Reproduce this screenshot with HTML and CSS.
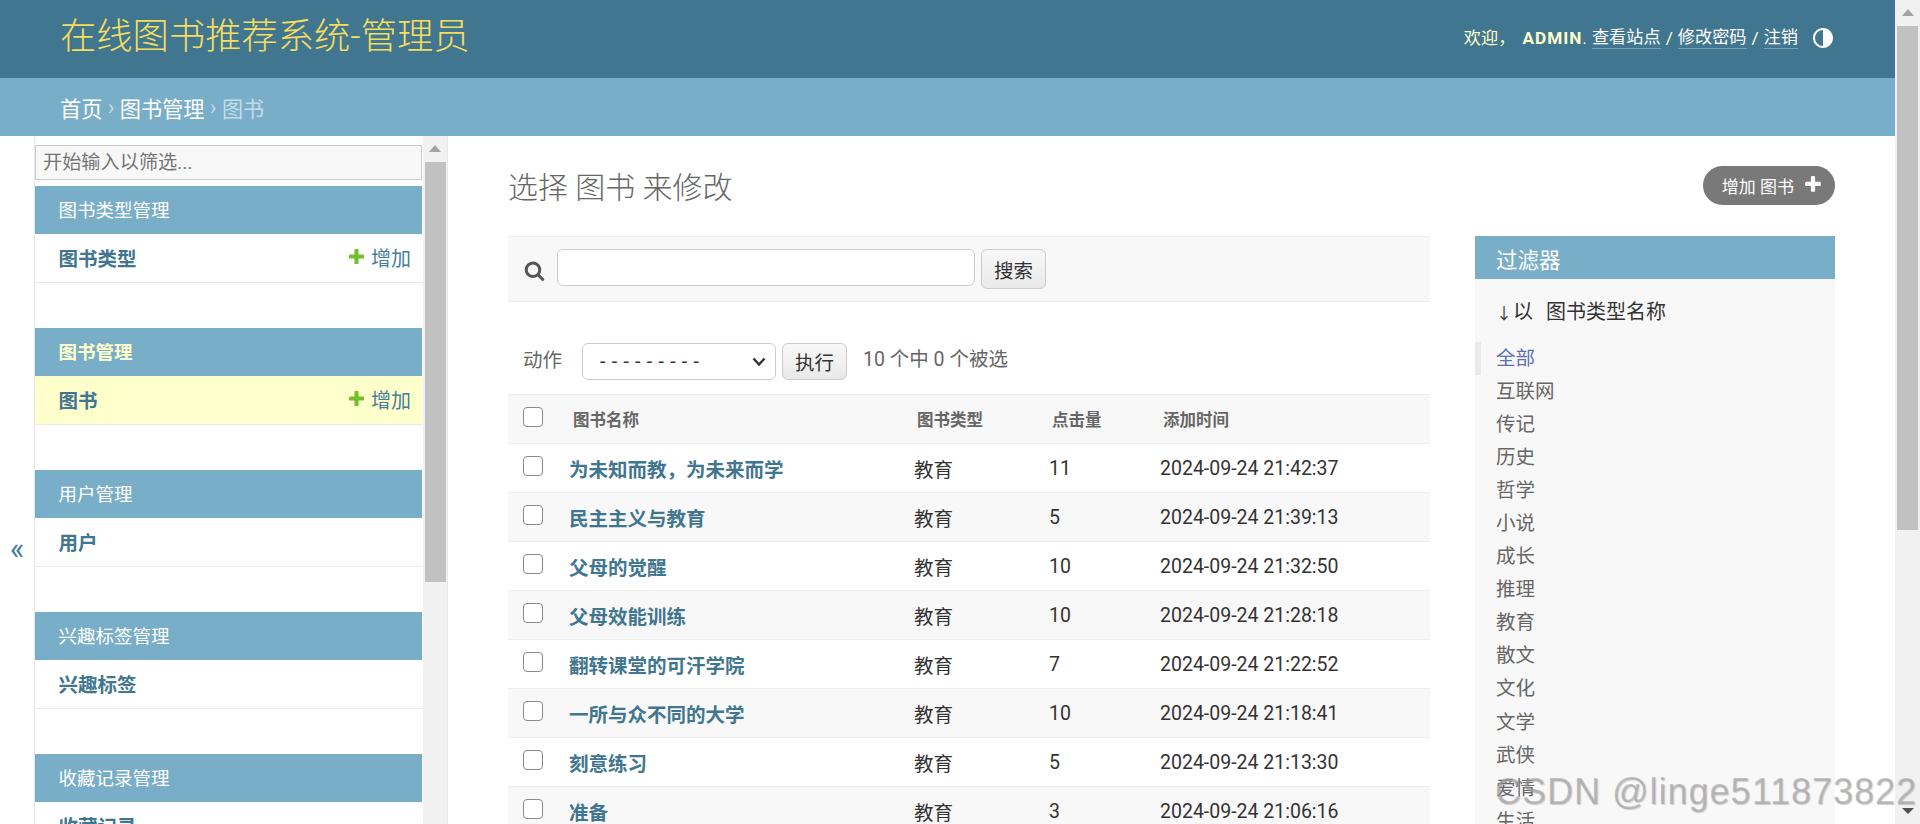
FILE: index.html
```html
<!DOCTYPE html>
<html lang="zh-CN">
<head>
<meta charset="utf-8">
<title>在线图书推荐系统-管理员</title>
<link rel="stylesheet" href="styles.css">
</head>
<body>
<div class="page">
  <header class="header">
    <h1 class="brand">在线图书推荐系统-管理员</h1>
    <div class="user-tools">
      <span>欢迎，</span><strong class="user-name">ADMIN</strong><span>.</span>
      <a class="tool-link" href="#">查看站点</a><span class="tool-sep">/</span><a class="tool-link" href="#">修改密码</a><span class="tool-sep">/</span><a class="tool-link" href="#">注销</a>
      <svg class="theme-icon" viewBox="0 0 24 24"><path fill-rule="evenodd" d="M12 22C6.477 22 2 17.523 2 12S6.477 2 12 2s10 4.477 10 10-4.477 10-10 10zm0-2V4a8 8 0 1 0 0 16z"/></svg>
    </div>
  </header>
  <nav class="breadcrumbs"><a href="#">首页</a><span class="crumb-sep">›</span><a href="#">图书管理</a><span class="crumb-sep">›</span><span class="crumb-current">图书</span></nav>
  <div class="main">
    <button class="nav-toggle" type="button">«</button>
    <aside class="sidebar">
      <div class="sidebar-list">
        <input class="nav-filter" type="text" placeholder="开始输入以筛选...">
        <section class="app">
          <h2 class="app-title">图书类型管理</h2>
          <div class="app-row"><a class="app-link" href="#">图书类型</a><a class="add-link" href="#"><svg class="add-icon" viewBox="0 0 1792 1792"><path d="M1600 796v192q0 40-28 68t-68 28h-416v416q0 40-28 68t-68 28h-192q-40 0-68-28t-28-68v-416h-416q-40 0-68-28t-28-68v-192q0-40 28-68t68-28h416v-416q0-40 28-68t68-28h192q40 0 68 28t28 68v416h416q40 0 68 28t28 68z"/></svg>增加</a></div>
        </section>
        <section class="app">
          <h2 class="app-title app-title-current">图书管理</h2>
          <div class="app-row app-row-current"><a class="app-link" href="#">图书</a><a class="add-link" href="#"><svg class="add-icon" viewBox="0 0 1792 1792"><path d="M1600 796v192q0 40-28 68t-68 28h-416v416q0 40-28 68t-68 28h-192q-40 0-68-28t-28-68v-416h-416q-40 0-68-28t-28-68v-192q0-40 28-68t68-28h416v-416q0-40 28-68t68-28h192q40 0 68 28t28 68v416h416q40 0 68 28t28 68z"/></svg>增加</a></div>
        </section>
        <section class="app">
          <h2 class="app-title">用户管理</h2>
          <div class="app-row"><a class="app-link" href="#">用户</a></div>
        </section>
        <section class="app">
          <h2 class="app-title">兴趣标签管理</h2>
          <div class="app-row"><a class="app-link" href="#">兴趣标签</a></div>
        </section>
        <section class="app">
          <h2 class="app-title">收藏记录管理</h2>
          <div class="app-row"><a class="app-link" href="#">收藏记录</a></div>
        </section>
      </div>
      <div class="scrollbar scrollbar-nav">
        <span class="arrow-up"></span>
        <span class="thumb thumb-nav"></span>
      </div>
    </aside>
    <main class="content">
      <div class="title-row">
        <h1 class="page-title">选择 图书 来修改</h1>
        <a class="add-button" href="#">增加 图书<svg class="add-button-icon" viewBox="0 0 1792 1792"><path d="M1600 796v192q0 40-28 68t-68 28h-416v416q0 40-28 68t-68 28h-192q-40 0-68-28t-28-68v-416h-416q-40 0-68-28t-28-68v-192q0-40 28-68t68-28h416v-416q0-40 28-68t68-28h192q40 0 68 28t28 68v416h416q40 0 68 28t28 68z"/></svg></a>
      </div>
      <div class="columns">
        <div class="changelist">
          <div class="toolbar">
            <svg class="search-icon" viewBox="0 0 1792 1792"><path d="M1216 832q0-185-131.5-316.5t-316.5-131.5-316.5 131.5-131.5 316.5 131.5 316.5 316.5 131.5 316.5-131.5 131.5-316.5zm512 832q0 52-38 90t-90 38q-54 0-90-38l-343-342q-179 124-399 124-143 0-273.5-55.5t-225-150-150-225-55.5-273.5 55.5-273.5 150-225 225-150 273.5-55.5 273.5 55.5 225 150 150 225 55.5 273.5q0 220-124 399l343 343q37 37 37 90z"/></svg>
            <input class="search-input" type="text">
            <button class="btn btn-search" type="button">搜索</button>
          </div>
          <div class="actions">
            <span class="actions-label">动作</span>
            <select class="actions-select"><option>---------</option></select>
            <button class="btn btn-go" type="button">执行</button>
            <span class="actions-count">10 个中 0 个被选</span>
          </div>
          <table class="results">
            <thead>
              <tr><th class="col-check"><input class="check" type="checkbox"></th><th class="col-name">图书名称</th><th class="col-type">图书类型</th><th class="col-hits">点击量</th><th class="col-time">添加时间</th></tr>
            </thead>
            <tbody>
              <tr><td class="col-check"><input class="check" type="checkbox"></td><td><a class="row-link" href="#">为未知而教，为未来而学</a></td><td>教育</td><td>11</td><td>2024-09-24 21:42:37</td></tr>
              <tr><td class="col-check"><input class="check" type="checkbox"></td><td><a class="row-link" href="#">民主主义与教育</a></td><td>教育</td><td>5</td><td>2024-09-24 21:39:13</td></tr>
              <tr><td class="col-check"><input class="check" type="checkbox"></td><td><a class="row-link" href="#">父母的觉醒</a></td><td>教育</td><td>10</td><td>2024-09-24 21:32:50</td></tr>
              <tr><td class="col-check"><input class="check" type="checkbox"></td><td><a class="row-link" href="#">父母效能训练</a></td><td>教育</td><td>10</td><td>2024-09-24 21:28:18</td></tr>
              <tr><td class="col-check"><input class="check" type="checkbox"></td><td><a class="row-link" href="#">翻转课堂的可汗学院</a></td><td>教育</td><td>7</td><td>2024-09-24 21:22:52</td></tr>
              <tr><td class="col-check"><input class="check" type="checkbox"></td><td><a class="row-link" href="#">一所与众不同的大学</a></td><td>教育</td><td>10</td><td>2024-09-24 21:18:41</td></tr>
              <tr><td class="col-check"><input class="check" type="checkbox"></td><td><a class="row-link" href="#">刻意练习</a></td><td>教育</td><td>5</td><td>2024-09-24 21:13:30</td></tr>
              <tr><td class="col-check"><input class="check" type="checkbox"></td><td><a class="row-link" href="#">准备</a></td><td>教育</td><td>3</td><td>2024-09-24 21:06:16</td></tr>
            </tbody>
          </table>
        </div>
        <aside class="filter">
          <h2 class="filter-title">过滤器</h2>
          <h3 class="filter-heading"><span class="sort-arrow">↓</span>以 图书类型名称</h3>
          <ul class="filter-list">
            <li class="filter-item filter-item-selected">全部</li>
            <li class="filter-item">互联网</li>
            <li class="filter-item">传记</li>
            <li class="filter-item">历史</li>
            <li class="filter-item">哲学</li>
            <li class="filter-item">小说</li>
            <li class="filter-item">成长</li>
            <li class="filter-item">推理</li>
            <li class="filter-item">教育</li>
            <li class="filter-item">散文</li>
            <li class="filter-item">文化</li>
            <li class="filter-item">文学</li>
            <li class="filter-item">武侠</li>
            <li class="filter-item">爱情</li>
            <li class="filter-item">生活</li>
          </ul>
        </aside>
      </div>
    </main>
  </div>
</div>
<div class="scrollbar scrollbar-page">
  <span class="arrow-up"></span>
  <span class="thumb thumb-page"></span>
  <span class="arrow-down"></span>
</div>
<div class="watermark">CSDN @linge511873822</div>
</body>
</html>
```

FILE: styles.css
```css
* { box-sizing: border-box; }
html, body { height: 824px; }
body {
  margin: 0;
  display: flex;
  overflow: hidden;
  position: relative;
  background: #fff;
  color: #333;
  font-family: Roboto, "Noto Sans CJK SC", sans-serif;
  font-size: 19.5px;
}
a { text-decoration: none; color: #417690; }
h1, h2, h3, ul { margin: 0; padding: 0; }
li { list-style: none; }

.page { flex: 1 1 auto; min-width: 0; height: 824px; display: flex; flex-direction: column; }

/* header */
.header {
  flex: 0 0 78px;
  background: #417690;
  padding: 0 60px 0 60px;
  display: flex;
  align-items: center;
  justify-content: space-between;
}
.brand { font-size: 36.3px; font-weight: 300; color: #f5dd5d; line-height: 1; padding-bottom: 4px; }
.user-tools { display: flex; align-items: center; font-size: 17.2px; color: #ffc; line-height: 24px; margin-bottom: 2px; }
.user-name { font-weight: 700; margin-left: 7px; letter-spacing: 1px; }
.tool-link { color: #fff; border-bottom: 1px solid rgba(255,255,255,.3); line-height: 21px; margin-left: 5px; }
.tool-sep { color: #ffc; margin-left: 5px; }
.theme-icon { width: 24px; height: 24px; fill: #fff; margin-left: 13px; }

.breadcrumbs {
  flex: 0 0 58px;
  background: #79aec8;
  padding: 0 60px;
  display: flex;
  align-items: center;
  font-size: 21.2px;
  color: #fff;
}
.breadcrumbs a { color: #fff; }
.crumb-sep { color: #c4dce8; margin: 0 5.5px; }
.crumb-current { color: #c4dce8; }

/* main */
.main { flex: 1 1 auto; min-height: 0; display: flex; overflow: hidden; }
.nav-toggle {
  flex: 0 0 34px;
  border: 0;
  background: #fff;
  color: #447e9b;
  font-family: Roboto, sans-serif;
  font-size: 31px;
  line-height: 30px;
  padding: 138px 0 0;
  height: 100%;
  display: block;
  text-align: center;
}
.sidebar {
  flex: 0 0 414px;
  display: flex;
  border-left: 1px solid #e8e8e8;
  border-right: 1px solid #e8e8e8;
  height: 100%;
}
.sidebar-list { flex: 1 1 auto; min-width: 0; overflow: hidden; }
.nav-filter {
  display: block;
  width: 100%;
  height: 35px;
  margin: 9px 0 6px;
  padding: 0 7px;
  background: #f8f8f8;
  border: 1.5px solid #ccc;
  font-family: inherit;
  font-size: 19.2px;
  color: #333;
  outline: 0;
}
.nav-filter::placeholder { color: #757575; }
.app { margin-bottom: 45px; }
.app-title {
  height: 48px;
  line-height: 50px;
  padding-left: 23.5px;
  background: #79aec8;
  color: #fff;
  font-size: 18.5px;
  font-weight: 400;
}
.app-title-current { color: #ffc; font-weight: 700; }
.app-row {
  height: 49px;
  padding: 0 11px 0 23.5px;
  border-bottom: 1.5px solid #eaeaea;
  display: flex;
  align-items: center;
  justify-content: space-between;
}
.app-row-current { background: #ffc; }
.app-link { font-weight: 700; color: #417690; font-size: 19.5px; margin-bottom: 2px; }
.add-link { display: flex; align-items: center; color: #447e9b; font-size: 20px; margin-bottom: 2px; }
.add-icon { width: 19px; height: 19px; fill: #70bf2b; margin-right: 5px; margin-bottom: 2px; }

/* fake scrollbars */
.scrollbar { flex: 0 0 auto; background: #f1f1f1; position: relative; display: flex; flex-direction: column; align-items: center; }
.scrollbar-nav { width: 24px; margin-left: 1px; }
.scrollbar-page { width: 25px; height: 824px; }
.thumb { display: block; background: #c1c1c1; }
.thumb-nav { width: 21px; height: 420px; }
.thumb-page { width: 21px; height: 504px; }
.arrow-up { display: block; width: 0; height: 0; border: 6px solid transparent; border-top: 0; border-bottom: 7px solid #a3a3a3; margin: 9px 0 10px; }
.arrow-down { position: absolute; bottom: 10px; width: 0; height: 0; border: 6px solid transparent; border-bottom: 0; border-top: 6px solid #505050; }

/* content */
.content { flex: 1 1 auto; min-width: 0; padding: 30px 60px 0 60px; }
.title-row { display: flex; justify-content: space-between; align-items: flex-start; height: 70px; }
.page-title { font-size: 30px; font-weight: 300; color: #666; line-height: 42px; margin-top: 1px; }
.add-button {
  display: flex;
  align-items: center;
  height: 38.5px;
  padding: 0 12px 0 19px;
  border-radius: 20px;
  background: #797979;
  color: #fff;
  font-size: 17px;
}
.add-button-icon { width: 20px; height: 20px; fill: #fff; margin-left: 9px; margin-bottom: 2px; }
.columns { display: flex; gap: 45px; align-items: flex-start; }
.changelist { flex: 1 1 auto; min-width: 0; }

.toolbar {
  height: 66px;
  background: #f8f8f8;
  border-top: 1.5px solid #eee;
  border-bottom: 1.5px solid #eee;
  padding: 12px 0 0 16px;
  display: flex;
  align-items: flex-start;
}
.search-icon { width: 21px; height: 21px; fill: #555; margin-top: 11px; margin-right: 12px; flex: 0 0 auto; }
.search-input {
  width: 418px;
  height: 37px;
  background: #fff;
  border: 1.5px solid #ccc;
  border-radius: 6px;
  outline: 0;
}
.btn {
  height: 40px;
  border: 1.5px solid #ccc;
  border-radius: 6px;
  background: linear-gradient(#f8f8f8, #e9e9e9);
  color: #333;
  font-family: inherit;
  font-size: 19.5px;
  padding: 0;
}
.btn-search { width: 65px; margin-left: 6px; }
.actions { height: 92px; padding: 41px 0 0 15px; display: flex; align-items: flex-start; color: #666; }
.actions-label { width: 59px; line-height: 35px; flex: 0 0 auto; }
.actions-select {
  appearance: none;
  width: 194px;
  height: 37px;
  padding: 0 6px 0 17px;
  background: #fff url("data:image/svg+xml;utf8,<svg xmlns='http://www.w3.org/2000/svg' width='14' height='10' viewBox='0 0 14 10'><path d='M1.5 1.5 7 7.5l5.5-6' fill='none' stroke='%23333' stroke-width='2.4'/></svg>") no-repeat right 9px center;
  border: 1.5px solid #ccc;
  border-radius: 6px;
  font-family: inherit;
  font-size: 19.5px;
  letter-spacing: 6.3px;
  color: #333;
}
.btn-go { width: 65px; height: 37px; margin-left: 6px; }
.actions-count { margin-left: 16px; line-height: 33px; font-size: 19.5px; }

.results { width: 100%; table-layout: fixed; border-collapse: collapse; }
.results th {
  height: 49px;
  background: #f8f8f8;
  border-top: 1.5px solid #eee;
  border-bottom: 1.5px solid #eee;
  text-align: left;
  font-size: 16.5px;
  font-weight: 700;
  color: #666;
  padding: 0 0 0 11px;
}
.results td {
  height: 49px;
  border-bottom: 1.5px solid #eee;
  padding: 1px 0 0 8px;
  color: #333;
}
.results tbody tr:nth-child(even) td { background: #f8f8f8; }
.results .col-check { width: 54px; padding: 0 0 0 15px; vertical-align: top; }
.col-name { width: 344px; }
.col-type { width: 135px; }
.col-hits { width: 111px; }
.check {
  appearance: none;
  display: block;
  width: 20px;
  height: 20px;
  margin: 12px 0 0;
  background: #fff;
  border: 1.5px solid #8a8a8a;
  border-radius: 4px;
}
.row-link { font-weight: 700; color: #417690; margin-left: -1px; }

.filter { flex: 0 0 360px; background: #f8f8f8; height: 620px; color: #666; }
.filter-title {
  height: 43px;
  line-height: 49px;
  padding-left: 21px;
  background: #79aec8;
  color: #fff;
  font-size: 21.5px;
  font-weight: 400;
}
.filter-heading { font-size: 20px; font-weight: 400; color: #333; padding: 19px 0 0 21px; line-height: 28px; height: 62.5px; word-spacing: 8px; }
.sort-arrow { display: inline-block; width: 17px; font-size: 16px; color: #333; }
.filter-item { height: 33.1px; line-height: 33px; padding-left: 21px; color: #666; }
.filter-item-selected { color: #5b6fb5; border-left: 6px solid #eaeaea; padding-left: 15px; }

.watermark {
  position: absolute;
  left: 1495px;
  top: 770px;
  font-family: "Liberation Sans", sans-serif;
  font-size: 36px;
  line-height: 44px;
  color: rgba(160,160,160,.6);
  text-shadow: 1px 1px 1px rgba(120,120,120,.35);
  white-space: nowrap;
  letter-spacing: 1px;
}
```
